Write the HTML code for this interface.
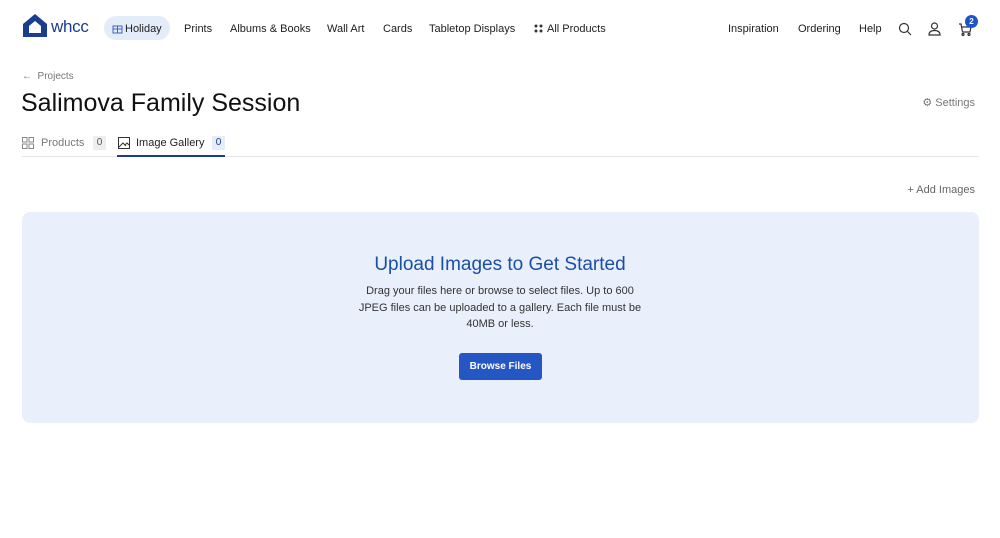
<!DOCTYPE html>
<html><head><style>
*{box-sizing:border-box;margin:0;padding:0}
body{width:1000px;height:538px;background:#fff;font-family:"Liberation Sans",sans-serif;color:#1d1d1f;position:relative;overflow:hidden}
.a{position:absolute;white-space:nowrap}
.nav{font-size:11px;top:23px}
</style></head><body>
<svg class="a" style="left:22px;top:13px" width="26" height="24" viewBox="0 0 26 24"><path d="M13 1L1 11V24H25V11Z" fill="#1a3d8f"/><path d="M7 13L13 8L19 13V20H7Z" fill="#fff"/></svg>
<div class="a" style="left:51px;top:17px;font-size:17px;color:#1a3d8f;letter-spacing:-0.3px">whcc</div>
<div class="a" style="left:104px;top:16px;width:66px;height:24px;border-radius:12px;background:#e4ecf9"></div>
<svg class="a" style="left:112px;top:23px" width="11" height="11" viewBox="0 0 11 11" fill="none" stroke="#3b64c0"><rect x="1" y="3" width="9" height="7"/><path d="M5.5 3V10M1 6H10"/></svg>
<div class="a nav" style="left:125px">Holiday</div>
<div class="a nav" style="left:184px">Prints</div>
<div class="a nav" style="left:230px">Albums &amp; Books</div>
<div class="a nav" style="left:327px">Wall Art</div>
<div class="a nav" style="left:383px">Cards</div>
<div class="a nav" style="left:429px">Tabletop Displays</div>
<svg class="a" style="left:534px;top:24px" width="9" height="9"><circle cx="2" cy="2" r="1.5" fill="#333"/><circle cx="7" cy="2" r="1.5" fill="#333"/><circle cx="2" cy="7" r="1.5" fill="#333"/><circle cx="7" cy="7" r="1.5" fill="#333"/></svg>
<div class="a nav" style="left:547px">All Products</div>
<div class="a nav" style="left:728px">Inspiration</div>
<div class="a nav" style="left:798px">Ordering</div>
<div class="a nav" style="left:859px">Help</div>
<svg class="a" style="left:898px;top:22px" width="14" height="14" fill="none" stroke="#333" stroke-width="1.2"><circle cx="6" cy="6" r="4.5"/><path d="M9.5 9.5L13 13"/></svg>
<svg class="a" style="left:928px;top:22px" width="13" height="14" fill="none" stroke="#333" stroke-width="1.2"><circle cx="6.5" cy="4" r="3"/><path d="M1 13Q1 8.5 6.5 8.5Q12 8.5 12 13Z"/></svg>
<svg class="a" style="left:958px;top:22px" width="14" height="14" fill="none" stroke="#333" stroke-width="1.2"><path d="M1 2H3L4.5 10H12L13 5H4"/><circle cx="5" cy="12.5" r="1"/><circle cx="11" cy="12.5" r="1"/></svg>
<div class="a" style="left:965px;top:15px;width:13px;height:13px;border-radius:50%;background:#1a56c7;color:#fff;font-size:8px;font-weight:bold;text-align:center;line-height:13px">2</div>
<div class="a" style="left:22px;top:71px;font-size:10px;color:#777">←&nbsp; Projects</div>
<div class="a" style="left:21px;top:89px;font-size:25px;color:#111">Salimova Family Session</div>
<div class="a" style="left:917px;top:96px;font-size:11px;color:#777;width:58px;text-align:right">⚙ Settings</div>
<svg class="a" style="left:22px;top:137px" width="12" height="12" fill="none" stroke="#888"><rect x=".5" y=".5" width="4.5" height="4.5"/><rect x="7" y=".5" width="4.5" height="4.5"/><rect x=".5" y="7" width="4.5" height="4.5"/><rect x="7" y="7" width="4.5" height="4.5"/></svg>
<div class="a" style="left:41px;top:137px;font-size:11px;color:#777">Products</div>
<div class="a" style="left:93px;top:136px;width:13px;height:14px;background:#eee;font-size:10px;color:#555;text-align:center;line-height:14px">0</div>
<svg class="a" style="left:118px;top:137px" width="12" height="12" fill="none" stroke="#333"><rect x=".5" y=".5" width="11" height="11"/><path d="M1 10L5 6L8 9M7 8L9 6L11 8"/></svg>
<div class="a" style="left:136px;top:137px;font-size:11px;color:#222">Image Gallery</div>
<div class="a" style="left:212px;top:136px;width:13px;height:14px;background:#e6edf8;font-size:10px;color:#1a3d8f;text-align:center;line-height:14px">0</div>
<div class="a" style="left:22px;top:156px;width:957px;height:1px;background:#e5e5e5"></div>
<div class="a" style="left:117px;top:155px;width:108px;height:2px;background:#1a3d8f"></div>
<div class="a" style="left:895px;top:184px;font-size:11px;color:#666;width:80px;text-align:right">+ Add Images</div>
<div class="a" style="left:22px;top:212px;width:957px;height:211px;background:#e9f0fb;border-radius:8px"></div>
<div class="a" style="left:0;width:1000px;top:254px;text-align:center;font-size:19px;color:#1a4fa8">Upload Images to Get Started</div>
<div class="a" style="left:300px;width:400px;top:283px;text-align:center;font-size:11px;line-height:16.5px;color:#333">Drag your files here or browse to select files. Up to 600<br>JPEG files can be uploaded to a gallery. Each file must be<br>40MB or less.</div>
<div class="a" style="left:459px;top:353px;width:83px;height:27px;background:#2557c4;border-radius:3px;color:#fff;font-size:10px;font-weight:bold;text-align:center;line-height:27px">Browse Files</div>
</body></html>
